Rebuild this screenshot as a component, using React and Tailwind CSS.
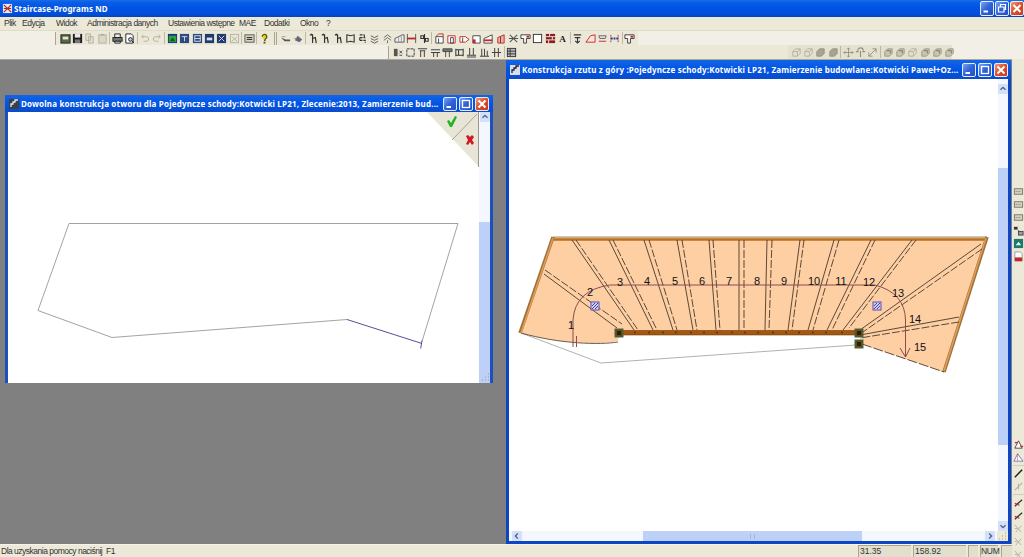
const TITLE_BG = "bg-[linear-gradient(180deg,#1a6fe0_0%,#0a5fe8_12%,#0054e3_45%,#0050dc_80%,#0a44b8_100%)]"

const menuItems = [
  ["Plik", "w-[18px]"],
  ["Edycja", "w-[34px]"],
  ["Widok", "w-[31px]"],
  ["Administracja danych", "w-[81px]"],
  ["Ustawienia wstępne", "w-[71px]"],
  ["MAE", "w-[25px]"],
  ["Dodatki", "w-[36px]"],
  ["Okno", "w-[26px]"],
  ["?", "w-[10px]"],
]

const K = "#1c1c1c"
const R = "#c8242a"
const G = "#b4b0a0"
const B = "#1d3f8f"

const icons = {
  open: <><rect x="1" y="2" width="10" height="9" fill="#5a6a4a" stroke={K} /><path d="M3 4h6v3H3z" fill="#e9e5c8" /><path d="M3 8h3v2H3z" fill="#3a7a3a" /></>,
  save: <><rect x="1" y="1" width="10" height="10" fill={K} /><rect x="3" y="1" width="6" height="4" fill="#e8e8e8" /><rect x="3" y="7" width="6" height="4" fill="#777" /></>,
  copyG: <path d="M2 1h5v7H2zM5 4h5v7H5z" fill="#e4e1d2" stroke={G} />,
  pasteG: <><rect x="2" y="2" width="8" height="9" fill="#dcd8c6" stroke={G} /><rect x="4" y="1" width="4" height="2" fill={G} /></>,
  print: <><path d="M3 1h6v4H3z" fill="#eee" stroke={K} /><rect x="1" y="5" width="10" height="4" fill="#777" stroke={K} /><path d="M3 9h6v2H3z" fill="#eee" stroke={K} /></>,
  preview: <><path d="M2 1h6l2 2v8H2z" fill="#fff" stroke={K} /><circle cx="7" cy="7" r="2" fill="#bcd" stroke={K} /><path d="M8.5 8.5 11 11" stroke={K} /></>,
  undoG: <path d="M3 4h5a2.500 2.500 0 0 1 0 5H5M3 4l2-2M3 4l2 2" fill="none" stroke={G} />,
  redoG: <path d="M9 4H4a2.500 2.500 0 0 0 0 5h3M9 4 7 2M9 4 7 6" fill="none" stroke={G} />,
  vGreen: <><rect x="1" y="1" width="10" height="10" fill="#143a72" /><rect x="2" y="3" width="8" height="7" fill="#2da048" /><path d="M3 9 6 5l3 4z" fill="#0d5a2a" /></>,
  vBlue: <><rect x="1" y="1" width="10" height="10" fill="#2a4a80" /><path d="M3 4h6M6 4v5" stroke="#dde" /></>,
  vBlue2: <><rect x="1" y="1" width="10" height="10" fill="#2a4a80" /><rect x="3" y="3" width="6" height="6" fill="none" stroke="#dde" /><path d="M3 6h6" stroke="#dde" /></>,
  vBlue3: <><rect x="1" y="1" width="10" height="10" fill="#1e3a70" /><path d="M3 5h6v3H3z" fill="#dde" /></>,
  vBlue4: <><rect x="1" y="1" width="10" height="10" fill="#1e3a70" /><path d="M3 3l6 6M9 3l-6 6" stroke="#dde" /></>,
  vGrey: <><rect x="1.500" y="1.500" width="9" height="9" fill="none" stroke={G} /><path d="M3 4l6 5M9 4 3 9" stroke={G} /></>,
  calc: <><rect x="1" y="2" width="10" height="8" fill="#d8d4c2" stroke="#555" /><path d="M3 5h6M3 7h6" stroke={K} /></>,
  help: <><path d="M3.500 4a2.500 2.500 0 1 1 4 2c-1 .7-1 1-1 2h-1" fill="#e8d020" stroke="#5a5210" strokeWidth="1.400" /><rect x="5" y="9.500" width="2" height="2" fill="#5a5210" /></>,
  shoe1: <><path d="M1 5l5 2h5v2H5z" fill="#555" /><path d="M2 4h4" stroke="#999" /></>,
  shoe2: <><path d="M2 8l3-5 5 4-3 3z" fill="#667" /><path d="M1 6h3" stroke="#999" /></>,
  h: <path d="M3 1l2 1v9M5 6l3-1 1 6M2 2h3" fill="none" stroke="#333" strokeWidth="1.300" />,
  frame: <path d="M2 2l4 1 4-1v8l-4-1-4 1z" fill="none" stroke="#333" strokeWidth="1.200" />,
  s1: <path d="M3 2h5M8 2v3M3 5h6M3 5v3M3 8h6v3" fill="none" stroke="#333" strokeWidth="1.200" strokeDasharray="3 1" />,
  s2: <path d="M2 3l4 2 4-2M2 6l4 2 4-2M2 9l4 2 4-2" fill="none" stroke="#555" />,
  s3: <path d="M2 5l4-3 4 3M2 8l4-3 4 3M6 8v3" fill="none" stroke="#666" />,
  plan: <><path d="M1 10V6l8-4h2v8z" fill="#eee" stroke="#555" /><path d="M5 4v6M8 3v7" stroke="#999" /></>,
  redbar: <><rect x="1" y="5" width="10" height="2" fill={R} /><path d="M1.500 1v10M10.500 1v10" stroke="#555" /></>,
  split: <path d="M6 1v10M2 3h3v3H2zM7 6h3v3H7z" fill="none" stroke="#333" strokeWidth="1.200" />,
  r1: <><path d="M2 4h8v7H2z" fill="#fff" stroke="#444" /><path d="M2 4l3-3h5v3" fill="none" stroke={R} /><path d="M5 6v5" stroke="#444" /></>,
  r2: <><path d="M2 3h8v8H2z" fill="#fff" stroke={R} /><path d="M5 5h3v6H5z" fill="none" stroke="#444" /></>,
  r3: <><path d="M1 4h6l4 3-4 3H1z" fill="#fff" stroke={R} /><path d="M4 5v5" stroke="#444" /></>,
  r4: <><path d="M2 3h8v8H2z" fill="#fff" stroke="#444" /><path d="M2 7h3v4H2z" fill={R} /></>,
  r5: <><path d="M1 6l9-4v9H1z" fill="#fff" stroke="#444" /><path d="M1 7h9v2H1z" fill={R} /></>,
  r6: <><path d="M3 5l7-3v9H3z" fill="#f2b0a0" stroke={R} /><path d="M6 4v7" stroke="#444" /></>,
  cross: <path d="M2 2l8 8M10 2 2 10M1 6h10" stroke="#555" strokeWidth="1.100" />,
  flag: <><path d="M1 2h10v4H7v5H4V6H1z" fill="#fff" stroke="#333" /><path d="M7 3h3v2H7z" fill={R} /></>,
  square: <rect x="1.500" y="1.500" width="9" height="9" fill="#fff" stroke="#333" />,
  brick: <><rect x="1" y="1" width="10" height="10" fill="#8e1c1c" /><path d="M1 4h10M1 7.500h10M5 1v3M8 4v3.500M4 7.500V11" stroke="#eee" /></>,
  a: <text x="6" y="10" textAnchor="middle" fontSize="10" fontWeight="700" fontFamily="Liberation Serif, serif" fill={K}>A</text>,
  down: <path d="M2 2h8M3 5h6M6 5v6M3.500 8.500 6 11l2.500-2.500" fill="none" stroke="#333" strokeWidth="1.200" />,
  trap: <path d="M1 10h10V2L6 3z" fill="#fbe6d8" stroke={R} />,
  trap2: <><path d="M2 3h8l-1 3H3z" fill="#ddd" stroke="#666" /><path d="M2 9h8" stroke={R} /></>,
  dots: <><path d="M2 2v8M10 2v8" stroke={R} strokeDasharray="2 1" /><path d="M2 6h8" stroke={B} strokeWidth="2" strokeDasharray="2 1" /></>,
  e: <><path d="M1 2h4v8H1z" fill="#555" /><path d="M7 4l3 3M10 4 7 7M7 9h3" stroke="#444" /></>,
  rect: <path d="M2 2h8v8H2z" fill="none" stroke="#333" strokeDasharray="3 1" />,
  t: <path d="M1 2h10M3 4h6M4 4v7M8 4v7" fill="none" stroke="#444" strokeWidth="1.100" />,
  t2: <path d="M1 3h10M1 6h10M4 6v5M8 6v5" fill="none" stroke="#444" strokeWidth="1.100" />,
  t3: <path d="M1 2h10v3H1zM4 5v6M8 5v6" fill="#777" stroke="#444" />,
  ib: <path d="M2 2v8M10 2v8M2 3h8M2 9h8M5 3v6" fill="none" stroke="#333" strokeWidth="1.100" />,
  b1: <path d="M1 9h10M1 11h10M4 1v8M8 1v8" fill="none" stroke="#444" strokeWidth="1.100" />,
  b2: <path d="M1 10h10M3 2v8M6 2v8M9 4v6" fill="none" stroke="#444" strokeWidth="1.100" />,
  b3: <path d="M1 6h10M4 1v10M8 1v10" fill="none" stroke="#444" strokeWidth="1.100" />,
  grid: <><rect x="1.500" y="1.500" width="9" height="9" fill="#bbb" stroke="#333" /><path d="M1 4.500h10M1 7.500h10M4.500 2v8" stroke="#333" /></>,
  c1: <path d="M2 5l3-3h5v5l-3 3H2zM2 5h5v5M7 5l3-3" fill="none" stroke={G} />,
  c2: <path d="M2 5l3-3h5v5l-3 3H2z" fill="#a8a494" stroke="#96927f" />,
  c3: <><path d="M2 5l3-3h5v5l-3 3H2z" fill="#c8c5b4" stroke="#9a9684" /><path d="M4 4h4v3" fill="none" stroke="#77745f" /></>,
  move: <path d="M6 1v10M1 6h10M6 1 4.500 2.500M6 1l1.500 1.500M6 11 4.500 9.500M6 11l1.500-1.500M1 6l1.500-1.500M1 6l1.500 1.500M11 6 9.500 4.500M11 6 9.500 7.500" fill="none" stroke="#96927f" />,
  rot: <path d="M6 4v7M3 4a3 3 0 0 1 6 0M1 5h3M8 5h3" fill="none" stroke="#96927f" strokeWidth="1.200" />,
  diag: <path d="M2 10l8-8M6 2h4v4M2 6v4h4" fill="none" stroke="#96927f" />,
  tri: <><path d="M1 10 5 2l6 8z" fill="#fff" stroke="#7a76b0" /><path d="M5 2v8" stroke={R} strokeDasharray="1 1" /></>,
  pen: <path d="M2 10l8-8" stroke={K} strokeWidth="1.600" />,
  penG: <path d="M2 10l8-8M6 3v6" stroke={G} strokeWidth="1.200" />,
  penR: <><path d="M2 10l8-7" stroke="#333" strokeWidth="1.400" /><path d="M2 7l5 2" stroke={R} strokeWidth="1.400" /></>,
  cG: <path d="M2 2l7 8M9 3 3 10M2 6h3" fill="none" stroke={G} />,
  teal: <><rect x="1" y="1" width="10" height="10" fill="#1c7a6a" /><path d="M3 8l3-4 3 4z" fill="#dfe" /></>,
  red: <><path d="M2 1h6l2 2v8H2z" fill="#fff" stroke="#999" /><rect x="2" y="7" width="8" height="4" fill={R} /></>,
  cc: <><rect x="1.500" y="3" width="9" height="6" fill="#d4d0c0" stroke="#7c7866" /><path d="M3 6h6" stroke="#7c7866" strokeDasharray="1 1" /></>,
  nod: <><path d="M1 2h4v3H1z" fill="#333" /><path d="M5 5l3 3" stroke="#666" /><rect x="6" y="7" width="5" height="4" fill="#9a9ab0" stroke="#444" /></>,
  triRed: <><path d="M2 10 6 2l4 8z" fill="#fff" stroke="#444" /><path d="M2 4h3M8 8h3" stroke={R} strokeWidth="1.500" /></>,
}

const row1 = [
  "open", "save", "copyG", "pasteG", "|", "print", "preview", "|", "undoG", "redoG", "|",
  "vGreen", "vBlue", "vBlue2", "vBlue3", "vBlue4", "vGrey", "|", "calc", "|", "help", "#",
  "shoe1", "shoe2", "|", "h", "h", "h", "frame", "s1", "s2", "s3", "plan", "redbar", "split", "|",
  "r1", "r2", "r3", "r4", "r5", "r6", "cross", "flag", "square", "brick", "a", "|",
  "down", "trap", "trap2", "dots", "|", "flag",
]
const row2 = ["e", "rect", "t", "t2", "t3", "ib", "b1", "b2", "b3", "|", "grid"]
const row2Right = ["c1", "c1", "c2", "c2", "|", "move", "rot", "diag", "|", "c3", "c3", "c1", "c3", "c3", "c3"]

const stripTop = ["cc", "cc", "cc", "nod", "teal", "red"]
const stripBottom = ["triRed", "tri", "-", "pen", "penG", "-", "penR", "penR", "cG", "cG", "cG"]

const Icon = ({ name }) => (
  <svg viewBox="0 0 12 12" className="w-[11px] h-[11px] shrink-0">
    {icons[name]}
  </svg>
)

const Toolbar = ({ items }) => (
  <div className="flex items-center h-[14px]">
    {items.map((it, i) => {
      if (it === "|") return <div key={i} className="w-px h-[12px] bg-[#bdb9a6] mx-px" />
      if (it === "#") return (
        <div key={i} className="flex gap-px w-[9px] justify-center h-[13px]">
          <div className="w-px bg-[#a9a590]" />
          <div className="w-px bg-[#a9a590]" />
        </div>
      )
      return (
        <div key={i} className="w-[12.300px] flex justify-center">
          <Icon name={it} />
        </div>
      )
    })}
  </div>
)

const WinBtn = ({ kind, size }) => {
  const base = kind === "close"
    ? "bg-[linear-gradient(135deg,#f0a080,#e0502a_45%,#c8381c)]"
    : "bg-[linear-gradient(135deg,#7aa2f2,#2f62d8_50%,#2450c4)]"
  return (
    <div className={`${size} ${base} border border-[#e4ecfb] rounded-[2px] flex items-center justify-center shrink-0`}>
      <svg viewBox="0 0 12 12" className="w-full h-full">
        {kind === "min" && <rect x="2.500" y="8" width="4.500" height="2" fill="#fff" />}
        {kind === "max" && <rect x="2.500" y="2.500" width="7" height="7" fill="none" stroke="#fff" strokeWidth="1.300" />}
        {kind === "restore" && <path d="M4.500 4V2h5v5H8M2.500 4.500h5.500v5H2.500z" fill="none" stroke="#fff" strokeWidth="1.200" />}
        {kind === "close" && <path d="M2.500 2.500l7 7M9.500 2.500l-7 7" stroke="#fff" strokeWidth="2" />}
      </svg>
    </div>
  )
}

const ChildIcon = ({ light }) => (
  <svg viewBox="0 0 12 12" className="w-[12px] h-[12px] shrink-0">
    <rect x="1" y="1" width="10" height="10" fill={light ? "#d8dee8" : "#3a4048"} />
    <path d="M3 9V6h2V4h2V2h3" fill="none" stroke={light ? "#223" : "#e8e8e8"} strokeWidth="1.300" />
  </svg>
)

const Arrow = ({ dir }) => {
  const d = { up: "M3 7l3-3 3 3", down: "M3 5l3 3 3-3", left: "M7 3 4 6l3 3", right: "M5 3l3 3-3 3" }[dir]
  return (
    <div className="w-[10px] h-[10px] bg-[#d3e0fa] rounded-[1px] shrink-0">
      <svg viewBox="0 0 12 12" className="w-full h-full">
        <path d={d} fill="none" stroke="#4d6185" strokeWidth="1.600" />
      </svg>
    </div>
  )
}

const LeftDrawing = () => (
  <svg viewBox="8 112 471 270" className="w-full h-full block">
    <path d="M69 223H458L422 341M69 223 38 310 112 337 347 319" fill="none" stroke="#8c8c8c" strokeWidth="0.800" />
    <path d="M347 319 422 343M422 340 420.700 348" fill="none" stroke="#3d3d8f" strokeWidth="0.900" />
  </svg>
)

const treads = [
  [572, 240, 634, 330, 576, 240, 638, 330],
  [609, 240, 653, 330, 613, 240, 657, 330],
  [644, 240, 673, 330, 649, 240, 677, 330],
  [677, 240, 693, 330, 682, 240, 697, 330],
  [709, 240, 716, 330, 713, 240, 720, 330],
  [739, 240, 739, 330, 744, 240, 744, 330],
  [767, 240, 765, 330, 772, 240, 769, 330],
  [800, 240, 788, 330, 804, 240, 792, 330],
  [834, 240, 808, 330, 839, 240, 813, 330],
  [871, 240, 827, 330, 875, 240, 832, 330],
  [912, 240, 843, 330, 916, 240, 849, 328],
  [981, 244, 860, 330, 982, 249, 863, 332],
  [959, 317, 860, 335, 959, 322, 860, 338],
  [544, 274, 617, 328, 545, 270, 622, 324],
]

const numbers = [
  ["1", 571, 329], ["2", 590, 296], ["3", 620, 286], ["4", 647, 285], ["5", 675, 285],
  ["6", 702, 285], ["7", 729, 285], ["8", 757, 285], ["9", 784, 285], ["10", 814, 285],
  ["11", 841, 285], ["12", 869, 286], ["13", 898, 297], ["14", 915, 323], ["15", 920, 351],
]

const dots = [635, 649, 663, 676, 691, 704, 717, 732, 745, 758, 773, 786, 799, 813, 826, 842]

const Mark = ({ x, y }) => (
  <g>
    <rect x={x - 4} y={y - 4} width="8" height="8" fill="#d0d0f0" stroke="#5a4fb0" />
    <path d={`M${x - 3} ${y + 3}L${x + 3} ${y - 3}M${x - 3} ${y}L${x} ${y - 3}M${x} ${y + 3}L${x + 3} ${y}`} stroke="#4a3fa0" strokeWidth="1" />
  </g>
)

const Post = ({ x, y }) => (
  <g>
    <rect x={x - 4} y={y - 4} width="8" height="8" fill="#6a4a14" stroke="#3f6a4a" />
    <rect x={x - 2} y={y - 2} width="4" height="4" fill="#2c2008" />
  </g>
)

const StairDrawing = () => (
  <svg viewBox="509 79 489 452" className="w-full h-full block">
    <path d="M553 237H987L944 372 862 344 859 333H619L618 341C600 345 560 344 521 333Z" fill="#fdcfa3" />
    <path d="M521 333 601 363 856 345" fill="none" stroke="#a8a8a8" strokeWidth="0.900" />
    <path d="M521 333C560 344 600 345 618 342" fill="none" stroke="#5a4a3a" strokeWidth="0.900" />
    <path d="M553 237H987" stroke="#9a8a6a" strokeWidth="1" />
    <path d="M553 239.500H985" stroke="#b8701f" strokeWidth="2.600" />
    <path d="M553 237 520 333" stroke="#9a7440" strokeWidth="3.500" />
    <path d="M553 238 521 333" stroke="#e89a50" strokeWidth="1.500" />
    <path d="M987 237 944 372" stroke="#9a7440" strokeWidth="3.500" />
    <path d="M986 238 944 371" stroke="#e89a50" strokeWidth="1.500" />
    {treads.map((t, i) => (
      <g key={i} fill="none" strokeWidth="0.900">
        <path d={`M${t[0]} ${t[1]}L${t[2]} ${t[3]}`} stroke="#4a3a2c" />
        <path d={`M${t[4]} ${t[5]}L${t[6]} ${t[7]}`} stroke="#4a3a2c" strokeDasharray="8 2" />
      </g>
    ))}
    <path d="M862 344 944 372" stroke="#4a3a2c" strokeWidth="0.900" strokeDasharray="10 2" fill="none" />
    <rect x="619" y="330.500" width="240" height="4.500" fill="#a4570f" stroke="#6e3c10" strokeWidth="0.600" />
    {dots.map((x) => <circle key={x} cx={x} cy="332.500" r="1" fill="#5a3410" />)}
    <path d="M573 347V320Q575 290 610 285H875Q905 293 905.500 320V357M900 348 905.500 357 910 348" fill="none" stroke="#8f4a52" strokeWidth="1" />
    <path d="M576.500 336V347" stroke="#8f4a52" strokeWidth="1" />
    <Post x={619} y={333} />
    <Post x={859} y={333} />
    <Post x={859} y={344} />
    <Mark x={595} y={306} />
    <Mark x={877} y={306} />
    {numbers.map(([n, x, y]) => (
      <text key={n} x={x} y={y} textAnchor="middle" fontSize="11" fill="#111" fontFamily="Liberation Sans, sans-serif">{n}</text>
    ))}
  </svg>
)

const Grip = () => (
  <svg viewBox="0 0 10 10" className="w-[10px] h-[10px]">
    <path d="M2 8h1M5 8h1M8 8h1M5 5h1M8 5h1M8 2h1" stroke="#9a9a8c" />
  </svg>
)

const App = () => {
  return (
    <div className="w-[1024px] h-[557px] overflow-hidden flex flex-col bg-[#ece9d8] text-[#333] font-['Liberation_Sans',sans-serif] text-[8.500px]">
      <div className={`h-[17px] shrink-0 flex items-center pl-[2px] pr-0 ${TITLE_BG}`}>
        <svg viewBox="0 0 12 12" className="w-[11px] h-[11px] shrink-0">
          <rect x="1" y="1" width="10" height="10" fill="#e8e8f0" />
          <path d="M2 2l8 8M10 2l-8 8M2 6h8" stroke="#b02828" strokeWidth="1.300" />
        </svg>
        <span className="ml-[1px] text-white font-bold font-['Noto_Sans',sans-serif] text-[8px] tracking-[0.1px] flex-1">Staircase-Programs ND</span>
        <div className="flex gap-[1px] items-center">
          <WinBtn kind="min" size="w-[14px] h-[15px]" />
          <WinBtn kind="restore" size="w-[14px] h-[15px]" />
          <WinBtn kind="close" size="w-[14px] h-[15px]" />
        </div>
      </div>

      <div className="h-[13px] shrink-0 flex items-center pl-[4px] bg-[#ece9d8] tracking-[-0.5px]">
        {menuItems.map(([label, w]) => (
          <span key={label} className={`${w} shrink-0 whitespace-nowrap`}>{label}</span>
        ))}
      </div>

      <div className="h-[15px] shrink-0 flex items-center pl-[55px] bg-[#f2f0e6] border-t border-[#dedbc8]">
        <div className="flex items-center bg-[#ebe8d8] pr-[2px]">
          <div className="flex gap-px w-[4px] h-[13px]">
            <div className="w-px bg-[#a9a590]" />
          </div>
          <Toolbar items={row1} />
        </div>
      </div>

      <div className="h-[14px] shrink-0 flex items-center pl-[388px] bg-[#f2f0e6]">
        <div className="flex items-center bg-[#ebe8d8] w-[400px]">
          <div className="flex gap-px w-[4px] h-[13px]">
            <div className="w-px bg-[#a9a590]" />
          </div>
          <Toolbar items={row2} />
        </div>
        <div className="flex items-center bg-[#e4e1d0] pl-[2px] w-[164px]">
          <Toolbar items={row2Right} />
        </div>
      </div>

      <div className="flex-1 min-h-0 flex">
        <div className="flex-1 min-w-0 flex flex-col">
          <div className="relative h-[485px] bg-[#808080] border-t border-[#a8a8a0]">
            <div className="absolute left-[5px] top-[35px] w-[488px] h-[288px] flex flex-col bg-[#1c4fc0] pl-[3px] pr-[3px]">
              <div className="h-[17px] shrink-0 flex items-center -mx-[3px] pl-[3px] pr-[4px] bg-[linear-gradient(180deg,#1465e4,#0055e5_50%,#0a4ccc)]">
                <ChildIcon />
                <span className="ml-[1px] flex-1 min-w-0 whitespace-nowrap text-white font-bold font-['Noto_Sans',sans-serif] text-[8px] tracking-[0.18px]">Dowolna konstrukcja otworu dla Pojedyncze schody:Kotwicki LP21, Zlecenie:2013, Zamierzenie bud...</span>
                <div className="flex gap-[2px]">
                  <WinBtn kind="min" size="w-[14px] h-[14px]" />
                  <WinBtn kind="max" size="w-[14px] h-[14px]" />
                  <WinBtn kind="close" size="w-[14px] h-[14px]" />
                </div>
              </div>
              <div className="flex-1 min-h-0 flex">
                <div className="relative flex-1 min-w-0 bg-white">
                  <LeftDrawing />
                  <svg viewBox="0 0 52 55" className="absolute top-0 right-0 w-[52px] h-[55px]">
                    <path d="M0 0H52V55Z" fill="#e9e5d6" />
                    <path d="M51.500 0V55" stroke="#9a9688" />
                    <path d="M25 28 50 2" stroke="#a8a494" />
                    <path d="M20 9l2-1 2 3 4-7 2 1-5 10h-2z" fill="#22b422" />
                    <path d="M39 24l2-1 2 2 2-2 2 2-2 3 2 3-2 2-2-3-2 3-2-1 2-4z" fill="#d01820" />
                  </svg>
                </div>
                <div className="w-[11px] shrink-0 flex flex-col items-center bg-[#f4f7fd]">
                  <Arrow dir="up" />
                  <div className="h-[100px] shrink-0" />
                  <div className="flex-1 w-full bg-[#bcd0f8] flex items-end justify-center pb-[1px]">
                    <Grip />
                  </div>
                </div>
              </div>
            </div>

            <div className="absolute left-[506px] top-0 w-[505px] h-[484px] flex flex-col bg-[#0c46c4] px-[3px] pb-[3px]">
              <div className="h-[19px] shrink-0 flex items-center -mx-[3px] pl-[3px] pr-[3px] bg-[linear-gradient(180deg,#1465e4,#0055e5_50%,#0a4ccc)]">
                <ChildIcon light />
                <span className="ml-[1px] flex-1 min-w-0 whitespace-nowrap text-white font-bold font-['Noto_Sans',sans-serif] text-[8px] tracking-[0.18px]">Konstrukcja rzutu z góry :Pojedyncze schody:Kotwicki LP21, Zamierzenie budowlane:Kotwicki Paweł+Oz...</span>
                <div className="flex gap-[2px]">
                  <WinBtn kind="min" size="w-[14px] h-[14px]" />
                  <WinBtn kind="max" size="w-[14px] h-[14px]" />
                  <WinBtn kind="close" size="w-[14px] h-[14px]" />
                </div>
              </div>
              <div className="flex-1 min-h-0 flex">
                <div className="flex-1 min-w-0 bg-white">
                  <StairDrawing />
                </div>
                <div className="w-[10px] shrink-0 flex flex-col bg-[#f4f7fd]">
                  <div className="h-[5px] shrink-0" />
                  <Arrow dir="up" />
                  <div className="h-[74px] shrink-0" />
                  <div className="h-[277px] shrink-0 bg-[#bcd0f8]" />
                  <div className="flex-1" />
                  <Arrow dir="down" />
                </div>
              </div>
              <div className="h-[10px] shrink-0 flex items-center bg-[#f4f7fd]">
                <div className="ml-[3px]"><Arrow dir="left" /></div>
                <div className="ml-[121px] w-[219px] h-full bg-[#bcd0f8] flex items-center justify-center">
                  <div className="w-[5px] h-[5px] border-x border-[#9fb6e4]" />
                </div>
                <div className="flex-1" />
                <Arrow dir="right" />
                <div className="ml-[2px] w-[11px] h-[10px] bg-[#ece9d8]"><Grip /></div>
              </div>
            </div>
          </div>

          <div className="flex-1 min-h-0 flex items-center border-t border-[#f6f4ea] pl-[1px] bg-[#ece9d8]">
            <span className="flex-1 min-w-0 whitespace-nowrap tracking-[-0.5px]">Dla uzyskania pomocy naciśnij&nbsp; F1</span>
            <div className="flex h-[12px] text-[#333]">
              <div className="w-[53px] ml-[2px] pl-[1px] bg-[#e2dfcd] border-l border-t border-[#a9a590] leading-[11px]">31.35</div>
              <div className="w-[53px] ml-[2px] pl-[1px] bg-[#e2dfcd] border-l border-t border-[#a9a590] leading-[11px]">158.92</div>
              <div className="w-[10px] ml-[2px] bg-[#e2dfcd] border-l border-t border-[#a9a590]" />
              <div className="w-[18px] ml-[2px] bg-[#e2dfcd] border-l border-t border-[#a9a590] leading-[11px] tracking-[-0.3px]">NUM</div>
              <div className="w-[11px] ml-[3px] bg-[#e2dfcd] border-l border-t border-[#a9a590]" />
            </div>
          </div>
        </div>

        <div className="w-[12px] shrink-0 flex flex-col items-center bg-[#ece9d8] pt-[124px]">
          <div className="w-full h-px bg-[#bdb9a6] mb-[3px]" />
          <div className="flex flex-col gap-[2px]">
            {stripTop.map((it, i) => <Icon key={i} name={it} />)}
          </div>
          <div className="h-[177px] shrink-0" />
          <div className="flex flex-col gap-[2px]">
            {stripBottom.map((it, i) => it === "-"
              ? <div key={i} className="w-full h-px bg-[#d0ccb8]" />
              : <Icon key={i} name={it} />)}
          </div>
        </div>
      </div>
    </div>
  )
}

export default App
